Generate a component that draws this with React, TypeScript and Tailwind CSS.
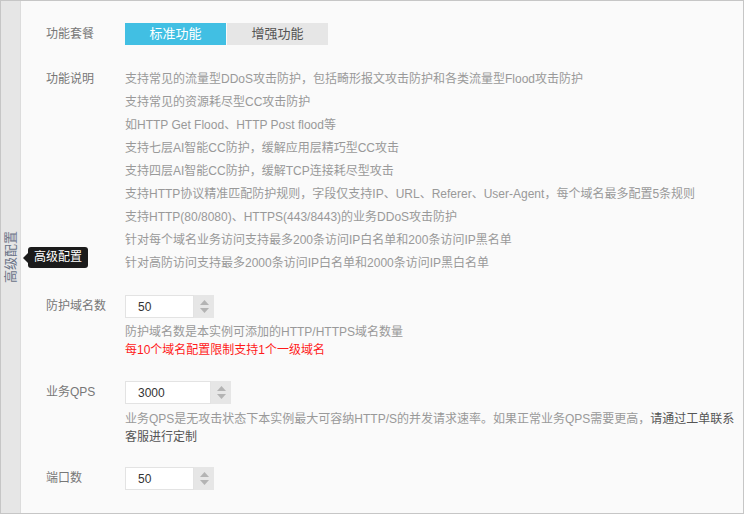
const FONT = 'font-["Liberation_Sans","Noto_Sans_CJK_SC",sans-serif]';

const features = [
  '支持常见的流量型DDoS攻击防护，包括畸形报文攻击防护和各类流量型Flood攻击防护',
  '支持常见的资源耗尽型CC攻击防护',
  '如HTTP Get Flood、HTTP Post flood等',
  '支持七层AI智能CC防护，缓解应用层精巧型CC攻击',
  '支持四层AI智能CC防护，缓解TCP连接耗尽型攻击',
  '支持HTTP协议精准匹配防护规则，字段仅支持IP、URL、Referer、User-Agent，每个域名最多配置5条规则',
  '支持HTTP(80/8080)、HTTPS(443/8443)的业务DDoS攻击防护',
  '针对每个域名业务访问支持最多200条访问IP白名单和200条访问IP黑名单',
  '针对高防访问支持最多2000条访问IP白名单和2000条访问IP黑白名单',
];

function NumberInput({ value, width }: { value: string; width: string }) {
  return (
    <div className="flex h-[23px]">
      <div className={`${width} h-full bg-white border border-[#e3e3e3] flex items-center pl-[12px] text-[12px] text-[#333]`}>
        {value}
      </div>
      <div className="w-[20px] h-full bg-[#e6e6e6] flex flex-col items-center justify-center gap-[3px]">
        <svg width="9" height="5" viewBox="0 0 9 5">
          <path d="M4.5 0L9 5H0z" fill="#b3b3b3" />
        </svg>
        <svg width="9" height="5" viewBox="0 0 9 5">
          <path d="M0 0h9L4.5 5z" fill="#b3b3b3" />
        </svg>
      </div>
    </div>
  );
}

function Row({ label, children, labelClass = '' }: { label: string; children: React.ReactNode; labelClass?: string }) {
  return (
    <div className="flex">
      <div className={`w-[79px] shrink-0 text-[12px] text-[#777] ${labelClass}`}>{label}</div>
      <div className="flex-1">{children}</div>
    </div>
  );
}

export default function App() {
  return (
    <div className={`w-[744px] h-[514px] border border-[#c6c6c6] flex bg-[#fafafa] ${FONT}`}>
      {/* side tab */}
      <div className="relative w-[20px] shrink-0 bg-[#e6e6e6] border-r border-[#dcdcdc]">
        <div className="absolute left-[3px] top-[227px] h-[58px] w-[14px] flex items-center justify-center">
          <span className="block whitespace-nowrap -rotate-90 text-[13px] leading-[14px] text-[#6a7386]">高级配置</span>
        </div>
        <div className="absolute left-[22px] top-[246px] z-10 flex items-center whitespace-nowrap">
          <div className="w-0 h-0 border-y-[5px] border-y-transparent border-r-[5px] border-r-[#1b1b1b]" />
          <div className="bg-[#1b1b1b] text-white text-[12px] leading-[21px] h-[21px] px-[6px] rounded-[3px]">高级配置</div>
        </div>
      </div>

      {/* content */}
      <div className="flex-1 pl-[25px] pt-[22px]">
        <Row label="功能套餐" labelClass="leading-[22px]">
          <div className="flex h-[22px] text-[13px]">
            <div className="w-[101px] bg-[#41bfe3] text-white flex items-center justify-center">标准功能</div>
            <div className="w-[101px] ml-[1px] bg-[#e6e6e6] text-[#555] flex items-center justify-center">增强功能</div>
          </div>
        </Row>

        <div className="mt-[23px]">
          <Row label="功能说明" labelClass="leading-[23px]">
            <div className="text-[12px] leading-[23px] text-[#999] whitespace-nowrap">
              {features.map((f) => (
                <div key={f}>{f}</div>
              ))}
            </div>
          </Row>
        </div>

        <div className="mt-[20px]">
          <Row label="防护域名数" labelClass="leading-[23px]">
            <NumberInput value="50" width="w-[69px]" />
            <div className="mt-[5px] text-[12px] leading-[18px]">
              <div className="text-[#999]">防护域名数是本实例可添加的HTTP/HTTPS域名数量</div>
              <div className="text-[#ff1a1a]">每10个域名配置限制支持1个一级域名</div>
            </div>
          </Row>
        </div>

        <div className="mt-[22px]">
          <Row label="业务QPS" labelClass="leading-[23px]">
            <NumberInput value="3000" width="w-[86px]" />
            <div className="mt-[6px] text-[12px] leading-[18px] whitespace-nowrap">
              <div className="text-[#999]">
                业务QPS是无攻击状态下本实例最大可容纳HTTP/S的并发请求速率。如果正常业务QPS需要更高，
                <span className="text-[#555]">请通过工单联系</span>
              </div>
              <div className="text-[#555]">客服进行定制</div>
            </div>
          </Row>
        </div>

        <div className="mt-[21px]">
          <Row label="端口数" labelClass="leading-[23px]">
            <NumberInput value="50" width="w-[69px]" />
          </Row>
        </div>
      </div>
    </div>
  );
}
